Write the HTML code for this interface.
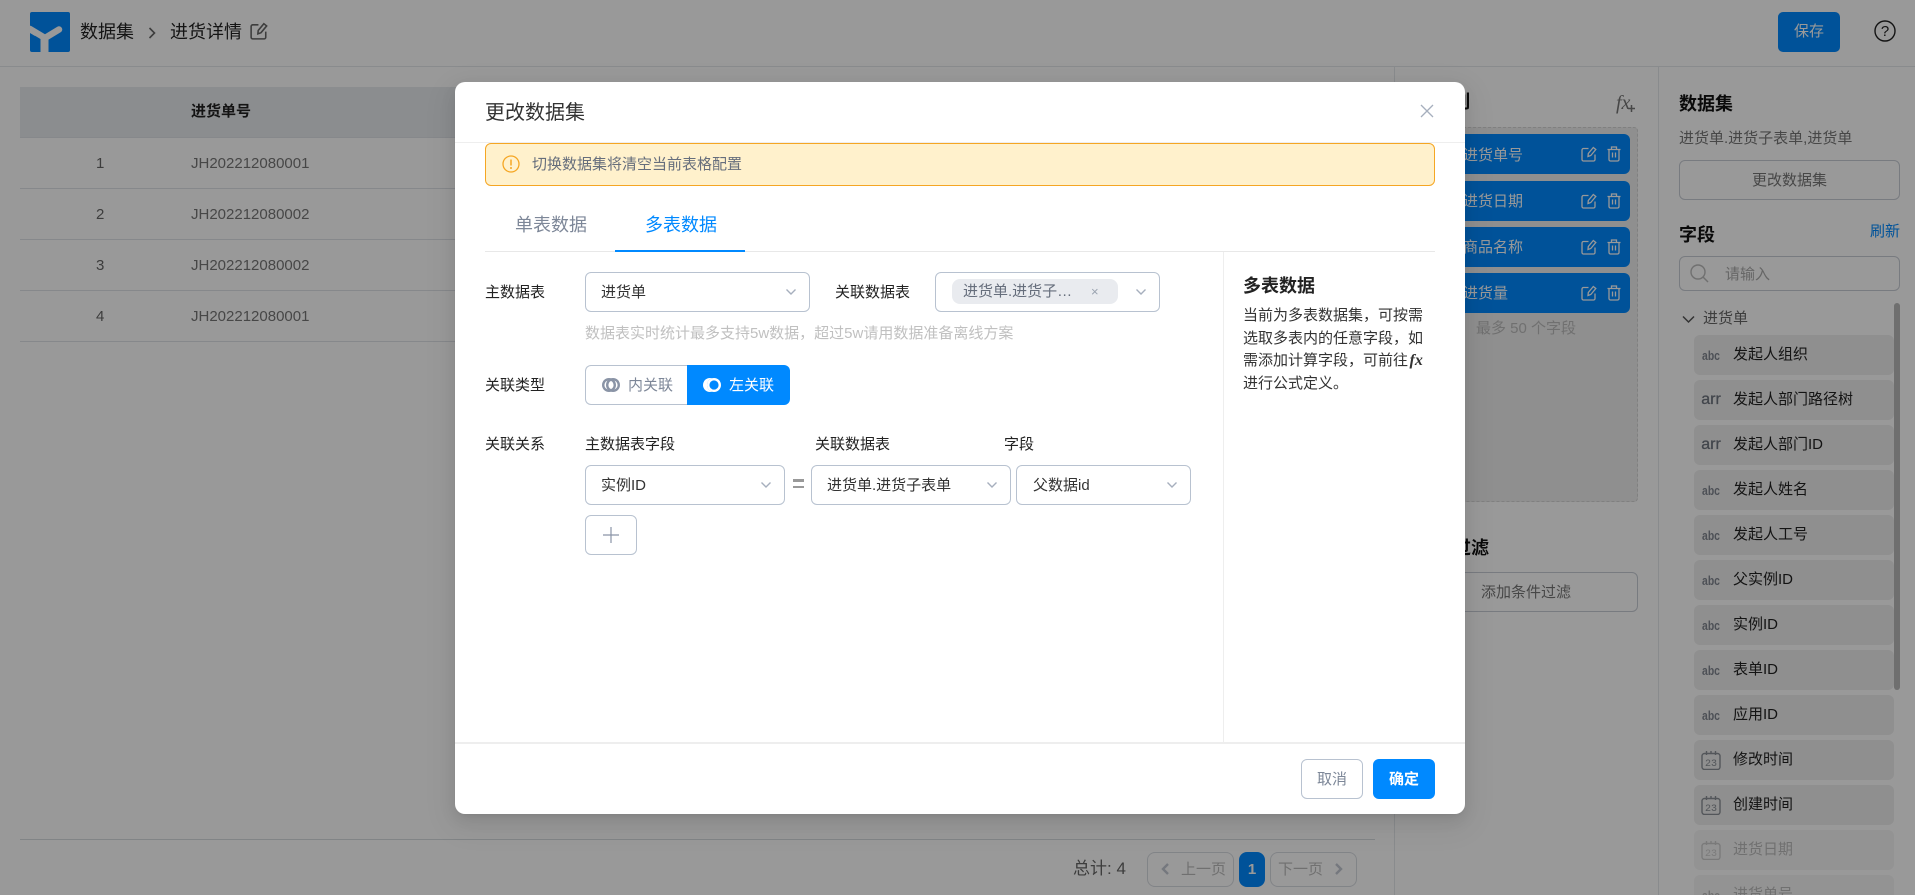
<!DOCTYPE html>
<html lang="zh">
<head>
<meta charset="utf-8">
<title>进货详情</title>
<style>
*{box-sizing:border-box;margin:0;padding:0}
html,body{width:1915px;height:895px;overflow:hidden;background:#fff}
body{position:relative;font-family:"Liberation Sans","Noto Sans CJK SC",sans-serif;font-size:15px;color:#333}
.a,.t{position:absolute}
.t{white-space:nowrap;height:20px;line-height:20px}
.b{font-weight:700}
.h18{font-size:18px;height:26px;line-height:26px}
.line{position:absolute;background:#e5e8ec}
.row{left:20px;width:1355px;height:1px;background:#dfe3e8}
.sel{position:absolute;height:40px;border:1px solid #b8c2d0;border-radius:6px;background:#fff}
.chev{position:absolute;width:14px;height:8px}
.item{position:absolute;left:1400px;width:230px;height:40px;background:#0089ff;border-radius:6px}
.f{position:absolute;left:1694px;width:200px;height:40px;background:#eee;border-radius:6px}
.f span.n{position:absolute;left:39px;top:10px;height:20px;line-height:20px;color:#222;white-space:nowrap}
.f span.ab{position:absolute;left:0;width:34px;top:13px;height:16px;line-height:16px;text-align:center;font-size:13px;font-weight:700;color:#808690;transform:scaleX(.8)}
.f span.ar{position:absolute;left:0;width:34px;top:11px;height:18px;line-height:18px;text-align:center;font-size:16px;font-weight:400;color:#6f757f;-webkit-text-stroke:.3px #6f757f}
.f svg{position:absolute;left:7px;top:10px}
.f.dis{background:#f6f6f6}
.f.dis span.n{color:#bbb}
.f.dis span.ab{color:#bbb}
#mask{position:absolute;left:0;top:0;width:1915px;height:895px;background:rgba(0,0,0,.4)}
#modal{position:absolute;left:455px;top:82px;width:1010px;height:732px;background:#fff;border-radius:10px;box-shadow:0 9px 28px 8px rgba(0,0,0,.05),0 6px 16px 0 rgba(0,0,0,.08),0 3px 6px -4px rgba(0,0,0,.12)}
</style>
</head>
<body>

<!-- header -->
<svg class="a" style="left:30px;top:12px" width="40" height="40" viewBox="0 0 40 40">
<rect width="40" height="40" rx="2" fill="#0089ff"/>
<path d="M0 17L15 26L29 17.500" fill="none" stroke="#fff" stroke-width="6.500" stroke-linecap="round"/>
<path d="M0 13.500v7.500l5 3z" fill="#fff"/>
<rect x="10.500" y="24" width="8" height="16" fill="#fff"/>
</svg>
<div class="t h18" style="left:80px;top:19px;color:#222">数据集</div>
<svg class="a" style="left:148px;top:26px" width="9" height="14" viewBox="0 0 9 14"><path d="M1.500 2l5 5-5 5" fill="none" stroke="#666" stroke-width="1.600"/></svg>
<div class="t h18" style="left:170px;top:19px;color:#222">进货详情</div>
<svg class="a" style="left:250px;top:22px" width="18" height="18" viewBox="0 0 16 16"><g fill="none" stroke="#666" stroke-width="1.400"><path d="M14 8.500v5a1.500 1.500 0 0 1-1.500 1.500h-10A1.500 1.500 0 0 1 1 13.500v-9.500A1.500 1.500 0 0 1 2.500 2.500H7.500"/><path d="M7 10.500l.3-3L12.300 1.500l2.500 2-5 6z"/></g></svg>
<div class="line" style="left:0;top:66px;width:1915px;height:1px"></div>
<div class="a" style="left:1778px;top:12px;width:62px;height:40px;background:#0089ff;border-radius:5px;color:#fff;text-align:center;line-height:40px">保存</div>
<svg class="a" style="left:1874px;top:20px" width="22" height="22" viewBox="0 0 22 22"><circle cx="11" cy="11" r="10" fill="none" stroke="#222" stroke-width="1.400"/><text x="11" y="16" text-anchor="middle" font-family="Liberation Sans" font-size="15" fill="#222">?</text></svg>

<!-- table -->
<div class="a" style="left:20px;top:87px;width:1355px;height:50px;background:#e8ebef"></div>
<div class="t b" style="left:191px;top:102px;color:#222">进货单号</div>
<div class="row a" style="top:137px"></div>
<div class="t" style="left:96px;top:154px;color:#666">1</div><div class="t" style="left:191px;top:154px;color:#777">JH202212080001</div>
<div class="row a" style="top:188px"></div>
<div class="t" style="left:96px;top:205px;color:#666">2</div><div class="t" style="left:191px;top:205px;color:#777">JH202212080002</div>
<div class="row a" style="top:239px"></div>
<div class="t" style="left:96px;top:256px;color:#666">3</div><div class="t" style="left:191px;top:256px;color:#777">JH202212080002</div>
<div class="row a" style="top:290px"></div>
<div class="t" style="left:96px;top:307px;color:#666">4</div><div class="t" style="left:191px;top:307px;color:#777">JH202212080001</div>
<div class="row a" style="top:341px"></div>

<!-- pager -->
<div class="line" style="left:20px;top:839px;width:1355px;height:1px;background:#d8dce0"></div>
<div class="t" style="left:1073px;top:859px;font-size:17px;color:#666">总计: 4</div>
<div class="a" style="left:1147px;top:852px;width:87px;height:35px;border:1px solid #d8dce2;border-radius:8px"></div>
<svg class="a" style="left:1160px;top:862px" width="11" height="14" viewBox="0 0 11 14"><path d="M8 2L3 7l5 5" fill="none" stroke="#c3c9d2" stroke-width="2.400"/></svg>
<div class="t" style="left:1181px;top:860px;color:#bbb">上一页</div>
<div class="a" style="left:1239px;top:852px;width:26px;height:35px;background:#0089ff;border-radius:8px;color:#fff;font-weight:700;text-align:center;line-height:35px">1</div>
<div class="a" style="left:1270px;top:852px;width:87px;height:35px;border:1px solid #d8dce2;border-radius:8px"></div>
<div class="t" style="left:1278px;top:860px;color:#bbb">下一页</div>
<svg class="a" style="left:1333px;top:862px" width="11" height="14" viewBox="0 0 11 14"><path d="M3 2l5 5-5 5" fill="none" stroke="#c3c9d2" stroke-width="2.400"/></svg>

<!-- column panel -->
<div class="line" style="left:1394px;top:67px;width:1px;height:828px"></div>
<div class="line" style="left:1658px;top:67px;width:1px;height:828px"></div>
<div class="t h18 b" style="left:1416px;top:89px;color:#111">表格列</div>
<div class="t" style="left:1616px;top:92px;font-family:'Liberation Serif',serif;font-style:italic;font-size:20px;color:#777;height:22px;line-height:22px">fx</div>
<svg class="a" style="left:1627px;top:104px" width="9" height="9" viewBox="0 0 9 9"><path d="M4.500 1v7M1 4.500h7" stroke="#777" stroke-width="1.500"/></svg>
<div class="a" style="left:1414px;top:127px;width:224px;height:375px;background:#eee;border:1px dashed #d5d5d5;border-radius:4px"></div>

<div class="item" style="top:134px"></div>
<div class="item" style="top:181px"></div>
<div class="item" style="top:227px"></div>
<div class="item" style="top:273px"></div>
<div class="t" style="left:1463px;top:146px;color:#fff">进货单号</div>
<div class="t" style="left:1463px;top:192px;color:#fff">进货日期</div>
<div class="t" style="left:1463px;top:238px;color:#fff">商品名称</div>
<div class="t" style="left:1463px;top:284px;color:#fff">进货量</div>

<svg width="0" height="0" style="position:absolute">
<defs>
<g id="ed" fill="none" stroke="#fff" stroke-width="1.300"><path d="M14 8.500v5a1.500 1.500 0 0 1-1.500 1.500h-10A1.500 1.500 0 0 1 1 13.500v-9.500A1.500 1.500 0 0 1 2.500 2.500H7.500"/><path d="M7 10.500l.3-3L12.300 1.500l2.500 2-5 6z"/></g>
<g id="tr" fill="none" stroke="#fff" stroke-width="1.300"><path d="M.5 3.500h13M4.500 3.500V1h5v2.500M2 3.500V13.500A1.500 1.500 0 0 0 3.500 15h7A1.500 1.500 0 0 0 12 13.500V3.500M5.500 6.500v5M8.500 6.500v5"/></g>
<g id="cal" fill="none" stroke-width="1.400"><rect x="1" y="3.500" width="18" height="16" rx="2.500"/><path d="M5.500 1v4M10 1v3M14.500 1v4" /></g>
</defs>
</svg>
<svg class="a" style="left:1581px;top:146px" width="16" height="16" viewBox="0 0 16 16"><use href="#ed"/></svg>
<svg class="a" style="left:1607px;top:146px" width="14" height="16" viewBox="0 0 14 16"><use href="#tr"/></svg>
<svg class="a" style="left:1581px;top:193px" width="16" height="16" viewBox="0 0 16 16"><use href="#ed"/></svg>
<svg class="a" style="left:1607px;top:193px" width="14" height="16" viewBox="0 0 14 16"><use href="#tr"/></svg>
<svg class="a" style="left:1581px;top:239px" width="16" height="16" viewBox="0 0 16 16"><use href="#ed"/></svg>
<svg class="a" style="left:1607px;top:239px" width="14" height="16" viewBox="0 0 14 16"><use href="#tr"/></svg>
<svg class="a" style="left:1581px;top:285px" width="16" height="16" viewBox="0 0 16 16"><use href="#ed"/></svg>
<svg class="a" style="left:1607px;top:285px" width="14" height="16" viewBox="0 0 14 16"><use href="#tr"/></svg>

<div class="t" style="left:1476px;top:319px;color:#bbb">最多 50 个字段</div>
<div class="t h18 b" style="left:1417px;top:535px;color:#111">条件过滤</div>
<div class="a" style="left:1414px;top:572px;width:224px;height:40px;border:1px solid #c8cdd5;border-radius:6px;text-align:center;line-height:40px;color:#777">添加条件过滤</div>

<!-- right panel -->
<div class="t h18 b" style="left:1679px;top:91px;color:#111">数据集</div>
<div class="t" style="left:1679px;top:129px;color:#777">进货单.进货子表单,进货单</div>
<div class="a" style="left:1679px;top:160px;width:221px;height:40px;border:1px solid #c8cdd5;border-radius:6px;text-align:center;line-height:40px;color:#777">更改数据集</div>
<div class="t h18 b" style="left:1679px;top:222px;color:#111">字段</div>
<div class="t" style="left:1870px;top:222px;color:#0089ff">刷新</div>
<div class="a" style="left:1679px;top:256px;width:221px;height:35px;border:1px solid #c8cdd5;border-radius:6px"></div>
<svg class="a" style="left:1690px;top:264px" width="19" height="19" viewBox="0 0 19 19"><circle cx="8" cy="8" r="7" fill="none" stroke="#bbb" stroke-width="1.400"/><path d="M13 13l5 5" stroke="#bbb" stroke-width="1.400"/></svg>
<div class="t" style="left:1725px;top:265px;color:#aaa">请输入</div>
<svg class="a" style="left:1682px;top:315px" width="13" height="9" viewBox="0 0 13 9"><path d="M1 1.500l5.500 5.500L12 1.500" fill="none" stroke="#555" stroke-width="1.500"/></svg>
<div class="t" style="left:1703px;top:309px;color:#666">进货单</div>
<div class="a" style="left:1894px;top:303px;width:6px;height:387px;background:#b9b9b9;border-radius:3px"></div>

<div class="f" style="top:335px"><span class="ab">abc</span><span class="n">发起人组织</span></div>
<div class="f" style="top:380px"><span class="ar">arr</span><span class="n">发起人部门路径树</span></div>
<div class="f" style="top:425px"><span class="ar">arr</span><span class="n">发起人部门ID</span></div>
<div class="f" style="top:470px"><span class="ab">abc</span><span class="n">发起人姓名</span></div>
<div class="f" style="top:515px"><span class="ab">abc</span><span class="n">发起人工号</span></div>
<div class="f" style="top:560px"><span class="ab">abc</span><span class="n">父实例ID</span></div>
<div class="f" style="top:605px"><span class="ab">abc</span><span class="n">实例ID</span></div>
<div class="f" style="top:650px"><span class="ab">abc</span><span class="n">表单ID</span></div>
<div class="f" style="top:695px"><span class="ab">abc</span><span class="n">应用ID</span></div>
<div class="f" style="top:740px"><svg width="20" height="20" viewBox="0 0 20 20"><use href="#cal" stroke="#8a8f96"/><text x="10" y="16" text-anchor="middle" font-family="Liberation Mono" font-size="10" fill="#8a8f96">23</text></svg><span class="n">修改时间</span></div>
<div class="f" style="top:785px"><svg width="20" height="20" viewBox="0 0 20 20"><use href="#cal" stroke="#8a8f96"/><text x="10" y="16" text-anchor="middle" font-family="Liberation Mono" font-size="10" fill="#8a8f96">23</text></svg><span class="n">创建时间</span></div>
<div class="f dis" style="top:830px"><svg width="20" height="20" viewBox="0 0 20 20"><use href="#cal" stroke="#ccc"/><text x="10" y="16" text-anchor="middle" font-family="Liberation Mono" font-size="10" fill="#ccc">23</text></svg><span class="n">进货日期</span></div>
<div class="f dis" style="top:875px"><span class="ab">abc</span><span class="n">进货单号</span></div>

<div id="mask"></div>

<!-- modal; inner coordinates = page minus (455,82) -->
<div id="modal">
<div class="t" style="left:30px;top:18px;font-size:20px;height:26px;line-height:26px;color:#333">更改数据集</div>
<svg class="a" style="left:965px;top:22px" width="14" height="14" viewBox="0 0 14 14"><path d="M1 1l12 12M13 1L1 13" stroke="#a6afbd" stroke-width="1.300"/></svg>
<div class="line" style="left:0;top:60px;width:1010px;height:1px;background:#eee"></div>

<div class="a" style="left:30px;top:61px;width:950px;height:43px;background:#fff1cc;border:1px solid #f5a623;border-radius:6px"></div>
<svg class="a" style="left:47px;top:73px" width="18" height="18" viewBox="0 0 18 18"><circle cx="9" cy="9" r="8" fill="none" stroke="#f5a623" stroke-width="1.300"/><path d="M9 4.500v6" stroke="#f5a623" stroke-width="1.500"/><circle cx="9" cy="13" r="1" fill="#f5a623"/></svg>
<div class="t" style="left:77px;top:73px;color:#666e7c">切换数据集将清空当前表格配置</div>

<div class="t" style="left:60px;top:131px;font-size:18px;height:24px;line-height:24px;color:#7d8798">单表数据</div>
<div class="t" style="left:190px;top:131px;font-size:18px;height:24px;line-height:24px;color:#0089ff">多表数据</div>
<div class="line" style="left:30px;top:169px;width:950px;height:1px;background:#e8e8e8"></div>
<div class="a" style="left:160px;top:168px;width:130px;height:2px;background:#0089ff"></div>

<div class="line" style="left:768px;top:170px;width:1px;height:490px;background:#eee"></div>
<div class="line" style="left:0;top:660px;width:1010px;height:2px;background:#eee"></div>

<div class="t" style="left:30px;top:201px;color:#222">主数据表</div>
<div class="sel" style="left:130px;top:190px;width:225px"></div>
<div class="t" style="left:146px;top:201px;color:#333">进货单</div>
<svg class="chev" style="left:329px;top:206px" viewBox="0 0 14 8"><path d="M2.500 1.500L7 6l4.500-4.500" fill="none" stroke="#a6afbd" stroke-width="1.400"/></svg>

<div class="t" style="left:380px;top:201px;color:#222">关联数据表</div>
<div class="sel" style="left:480px;top:190px;width:225px"></div>
<div class="a" style="left:497px;top:197px;width:166px;height:25px;background:#e9ebef;border-radius:8px"></div>
<div class="t" style="left:508px;top:200px;color:#666e7c">进货单.进货子…</div>
<div class="t" style="left:636px;top:200px;font-size:13px;color:#9aa3b0">×</div>
<svg class="chev" style="left:679px;top:206px" viewBox="0 0 14 8"><path d="M2.500 1.500L7 6l4.500-4.500" fill="none" stroke="#a6afbd" stroke-width="1.400"/></svg>

<div class="t" style="left:130px;top:242px;color:#c0c0c0">数据表实时统计最多支持5w数据，超过5w请用数据准备离线方案</div>

<div class="t" style="left:30px;top:294px;color:#222">关联类型</div>
<div class="a" style="left:130px;top:283px;width:103px;height:40px;border:1px solid #b8c2d0;border-right:0;border-radius:6px 0 0 6px"></div>
<div class="a" style="left:232px;top:283px;width:103px;height:40px;background:#0089ff;border-radius:0 6px 6px 0"></div>
<svg class="a" style="left:147px;top:295px" width="18" height="16" viewBox="0 0 18 16"><circle cx="7" cy="8" r="5.800" fill="none" stroke="#8a94a6" stroke-width="2.400"/><circle cx="11" cy="8" r="5.800" fill="none" stroke="#8a94a6" stroke-width="2.400"/></svg>
<div class="t" style="left:173px;top:294px;color:#7d8798">内关联</div>
<svg class="a" style="left:248px;top:295px" width="18" height="16" viewBox="0 0 18 16"><circle cx="7" cy="8" r="7" fill="#fff"/><circle cx="11" cy="8" r="7" fill="#0089ff"/><circle cx="11" cy="8" r="5.800" fill="none" stroke="#fff" stroke-width="2.400"/></svg>
<div class="t" style="left:274px;top:294px;color:#fff">左关联</div>

<div class="t" style="left:30px;top:353px;color:#222">关联关系</div>
<div class="t" style="left:130px;top:353px;color:#222">主数据表字段</div>
<div class="t" style="left:360px;top:353px;color:#222">关联数据表</div>
<div class="t" style="left:549px;top:353px;color:#222">字段</div>

<div class="sel" style="left:130px;top:383px;width:200px"></div>
<div class="t" style="left:146px;top:394px;color:#333">实例ID</div>
<svg class="chev" style="left:304px;top:399px" viewBox="0 0 14 8"><path d="M2.500 1.500L7 6l4.500-4.500" fill="none" stroke="#a6afbd" stroke-width="1.400"/></svg>
<div class="a" style="left:338px;top:397px;width:11px;height:2.500px;background:#999"></div>
<div class="a" style="left:338px;top:403.500px;width:11px;height:2.500px;background:#999"></div>
<div class="sel" style="left:356px;top:383px;width:200px"></div>
<div class="t" style="left:372px;top:394px;color:#333">进货单.进货子表单</div>
<svg class="chev" style="left:530px;top:399px" viewBox="0 0 14 8"><path d="M2.500 1.500L7 6l4.500-4.500" fill="none" stroke="#a6afbd" stroke-width="1.400"/></svg>
<div class="sel" style="left:561px;top:383px;width:175px"></div>
<div class="t" style="left:578px;top:394px;color:#333">父数据id</div>
<svg class="chev" style="left:710px;top:399px" viewBox="0 0 14 8"><path d="M2.500 1.500L7 6l4.500-4.500" fill="none" stroke="#a6afbd" stroke-width="1.400"/></svg>

<div class="sel" style="left:130px;top:433px;width:52px"></div>
<svg class="a" style="left:147px;top:444px" width="18" height="18" viewBox="0 0 18 18"><path d="M9 1v16M1 9h16" stroke="#8a94a6" stroke-width="1.200"/></svg>

<div class="t b" style="left:788px;top:191px;font-size:18px;height:26px;line-height:26px;color:#222">多表数据</div>
<div class="a" style="left:788px;top:223px;width:190px;font-size:15px;line-height:22.500px;color:#333;white-space:nowrap">当前为多表数据集，可按需<br>选取多表内的任意字段，如<br>需添加计算字段，可前往<i style="font-family:'Liberation Serif',serif;font-weight:700;font-size:16px;margin-left:1.500px">fx</i><br>进行公式定义。</div>

<div class="a" style="left:846px;top:677px;width:62px;height:40px;border:1px solid #b8c2d0;border-radius:6px;text-align:center;line-height:40px;color:#7d8798">取消</div>
<div class="a" style="left:918px;top:677px;width:62px;height:40px;background:#0089ff;border-radius:6px;text-align:center;line-height:42px;color:#fff;font-weight:700">确定</div>
</div>

</body>
</html>
